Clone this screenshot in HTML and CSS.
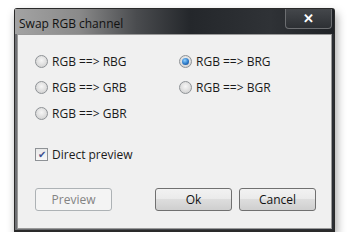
FILE: index.html
```html
<!DOCTYPE html>
<html lang="en">
<head>
  <meta charset="UTF-8">
  <title>Swap RGB channel</title>
  <link rel="stylesheet" href="styles.css">
</head>
<body>
  <div class="window">
    <div class="titlebar">
      <span class="title">Swap RGB channel</span>
      <span class="close">&#x2715;</span>
    </div>
    <div class="client">
      <div class="options">
        <label class="opt"><span class="radio"></span>RGB ==&gt; RBG</label>
        <label class="opt"><span class="radio checked"></span>RGB ==&gt; BRG</label>
        <label class="opt"><span class="radio"></span>RGB ==&gt; GRB</label>
        <label class="opt"><span class="radio"></span>RGB ==&gt; BGR</label>
        <label class="opt"><span class="radio"></span>RGB ==&gt; GBR</label>
      </div>
      <label class="opt check-row"><span class="check">&#x2714;</span>Direct preview</label>
      <div class="buttons">
        <button class="btn disabled">Preview</button>
        <span class="spacer"></span>
        <button class="btn">Ok</button>
        <button class="btn">Cancel</button>
      </div>
    </div>
  </div>
</body>
</html>
```

FILE: styles.css
```css
body {
  margin: 0;
  background: #ffffff;
  font-family: "Open Sans", "Noto Sans", sans-serif;
  font-size: 12px;
  color: #000;
}

.window {
  margin: 8px 0 0 14px;
  width: 321px;
  height: 224px;
  box-sizing: border-box;
  display: flex;
  flex-direction: column;
  background: linear-gradient(to right, #6f7073 0%, #4a4c50 40%, #2b2e33 100%);
  border: 1px solid #2a2a2a;
  border-bottom-width: 2px;
  border-radius: 3px 3px 0 0;
  box-shadow: 2px 5px 10px rgba(0, 0, 0, 0.35);
}

.titlebar {
  height: 25px;
  display: flex;
  align-items: flex-start;
  justify-content: space-between;
  background: linear-gradient(to right, #a3a3a3 0%, #8a8a8a 20%, #4a4c4f 38%, #24272b 55%, #2f3236 80%, #1f2226 100%);
}

.title {
  margin: 6px 0 0 4px;
  font-size: 12px;
  color: #111;
}

.close {
  width: 47px;
  height: 20px;
  margin: 0 2px 0 0;
  box-sizing: border-box;
  border: 1px solid #6c6e71;
  border-top: none;
  border-radius: 0 0 4px 4px;
  background: linear-gradient(#44474b, #2d3034);
  color: #fff;
  font-size: 13px;
  font-weight: bold;
  text-align: center;
  line-height: 19px;
}

.client {
  flex: 1;
  margin: 0 2px 1px 2px;
  background: #f0f0f0;
  border: 1px solid #9a9a9a;
  padding: 19px 0 0 17px;
  display: flex;
  flex-direction: column;
}

.options {
  display: grid;
  grid-template-columns: 144px 140px;
  row-gap: 12px;
}

.opt {
  display: flex;
  align-items: center;
  gap: 4px;
  height: 14px;
  color: #1a1a1a;
}

.radio {
  width: 11px;
  height: 11px;
  border-radius: 50%;
  border: 1px solid #8e9296;
  background: radial-gradient(circle at 50% 40%, #f6f6f6 0%, #dcdcdc 60%, #c9c9c9 100%);
  position: relative;
}

.radio.checked::after {
  content: "";
  position: absolute;
  left: 2px;
  top: 2px;
  width: 7px;
  height: 7px;
  border-radius: 50%;
  background: radial-gradient(circle at 40% 35%, #8fd0ff 0%, #2a79c8 55%, #1a3f7a 100%);
}

.check-row {
  margin-top: 27px;
}

.check {
  width: 11px;
  height: 11px;
  border: 1px solid #8e9296;
  background: linear-gradient(#e8e8e8, #f8f8f8);
  color: #3b4f8f;
  font-size: 10px;
  line-height: 11px;
  text-align: center;
}

.buttons {
  display: flex;
  margin-top: 27px;
  padding-right: 15px;
  gap: 7px;
}

.spacer {
  flex: 1;
}

.btn {
  width: 77px;
  height: 23px;
  padding: 0;
  border: 1px solid #707070;
  border-radius: 3px;
  background: linear-gradient(#f2f2f2 0%, #ebebeb 45%, #dddddd 50%, #cfcfcf 100%);
  font-family: inherit;
  font-size: 12px;
  color: #111;
}

.btn.disabled {
  border-color: #adb2b5;
  background: #f4f4f4;
  color: #838383;
}
```
